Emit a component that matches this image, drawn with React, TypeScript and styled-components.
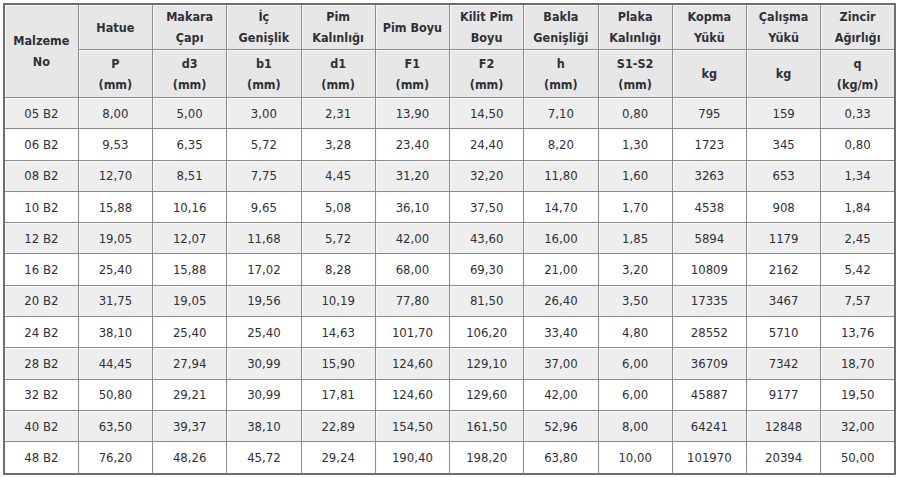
import React from 'react';
import styled, { createGlobalStyle } from 'styled-components';

const GlobalStyle = createGlobalStyle`
  html, body {
    margin: 0;
    padding: 0;
    background: #ffffff;
  }
  body {
    font-family: "DejaVu Sans Condensed", "Liberation Sans Narrow", "DejaVu Sans", sans-serif;
    color: #2f3038;
  }
`;

const Wrapper = styled.div`
  padding: 3px 4px 4px 3px;
`;

const Table = styled.table`
  width: 893px;
  border-collapse: collapse;
  table-layout: fixed;
  border: 2px solid #6e6e6e;
`;

const HeadCell = styled.th<{ tall?: boolean }>`
  background: #e7e7e7;
  border: 1px solid #8c8c8c;
  font-weight: bold;
  font-size: 12.5px;
  line-height: 21px;
  text-align: center;
  vertical-align: middle;
  padding: 0 2px;
  height: ${p => (p.tall ? '47px' : '44px')};
  box-shadow: inset 1px 1px 0 #f6f6f6;
`;

const Row = styled.tr<{ shaded: boolean }>`
  background: ${p => (p.shaded ? '#eeeeee' : '#ffffff')};
`;

const Cell = styled.td`
  border: 1px solid #8c8c8c;
  font-size: 13px;
  text-align: center;
  vertical-align: middle;
  height: 30.3px;
  padding: 0;
  box-shadow: inset 1px 1px 0 #fafafa;
`;

const headers: [string, string][] = [
  ['Hatue', 'P\n(mm)'],
  ['Makara\nÇapı', 'd3\n(mm)'],
  ['İç\nGenişlik', 'b1\n(mm)'],
  ['Pim\nKalınlığı', 'd1\n(mm)'],
  ['Pim Boyu', 'F1\n(mm)'],
  ['Kilit Pim\nBoyu', 'F2\n(mm)'],
  ['Bakla\nGenişliği', 'h\n(mm)'],
  ['Plaka\nKalınlığı', 'S1-S2\n(mm)'],
  ['Kopma\nYükü', 'kg'],
  ['Çalışma\nYükü', 'kg'],
  ['Zincir\nAğırlığı', 'q\n(kg/m)'],
];

const rows: string[][] = [
  ['05 B2', '8,00', '5,00', '3,00', '2,31', '13,90', '14,50', '7,10', '0,80', '795', '159', '0,33'],
  ['06 B2', '9,53', '6,35', '5,72', '3,28', '23,40', '24,40', '8,20', '1,30', '1723', '345', '0,80'],
  ['08 B2', '12,70', '8,51', '7,75', '4,45', '31,20', '32,20', '11,80', '1,60', '3263', '653', '1,34'],
  ['10 B2', '15,88', '10,16', '9,65', '5,08', '36,10', '37,50', '14,70', '1,70', '4538', '908', '1,84'],
  ['12 B2', '19,05', '12,07', '11,68', '5,72', '42,00', '43,60', '16,00', '1,85', '5894', '1179', '2,45'],
  ['16 B2', '25,40', '15,88', '17,02', '8,28', '68,00', '69,30', '21,00', '3,20', '10809', '2162', '5,42'],
  ['20 B2', '31,75', '19,05', '19,56', '10,19', '77,80', '81,50', '26,40', '3,50', '17335', '3467', '7,57'],
  ['24 B2', '38,10', '25,40', '25,40', '14,63', '101,70', '106,20', '33,40', '4,80', '28552', '5710', '13,76'],
  ['28 B2', '44,45', '27,94', '30,99', '15,90', '124,60', '129,10', '37,00', '6,00', '36709', '7342', '18,70'],
  ['32 B2', '50,80', '29,21', '30,99', '17,81', '124,60', '129,60', '42,00', '6,00', '45887', '9177', '19,50'],
  ['40 B2', '63,50', '39,37', '38,10', '22,89', '154,50', '161,50', '52,96', '8,00', '64241', '12848', '32,00'],
  ['48 B2', '76,20', '48,26', '45,72', '29,24', '190,40', '198,20', '63,80', '10,00', '101970', '20394', '50,00'],
];

const lines = (text: string) =>
  text.split('\n').map((t, i) => (
    <React.Fragment key={i}>
      {i > 0 && <br />}
      {t}
    </React.Fragment>
  ));

const App: React.FC = () => (
  <>
    <GlobalStyle />
    <Wrapper>
      <Table>
        <thead>
          <tr>
            <HeadCell rowSpan={2}>{lines('Malzeme\nNo')}</HeadCell>
            {headers.map(([label]) => (
              <HeadCell key={label}>{lines(label)}</HeadCell>
            ))}
          </tr>
          <tr>
            {headers.map(([label, unit]) => (
              <HeadCell key={label} tall>
                {lines(unit)}
              </HeadCell>
            ))}
          </tr>
        </thead>
        <tbody>
          {rows.map((row, i) => (
            <Row key={row[0]} shaded={i % 2 === 0}>
              {row.map((value, j) => (
                <Cell key={j}>{value}</Cell>
              ))}
            </Row>
          ))}
        </tbody>
      </Table>
    </Wrapper>
  </>
);

export default App;
